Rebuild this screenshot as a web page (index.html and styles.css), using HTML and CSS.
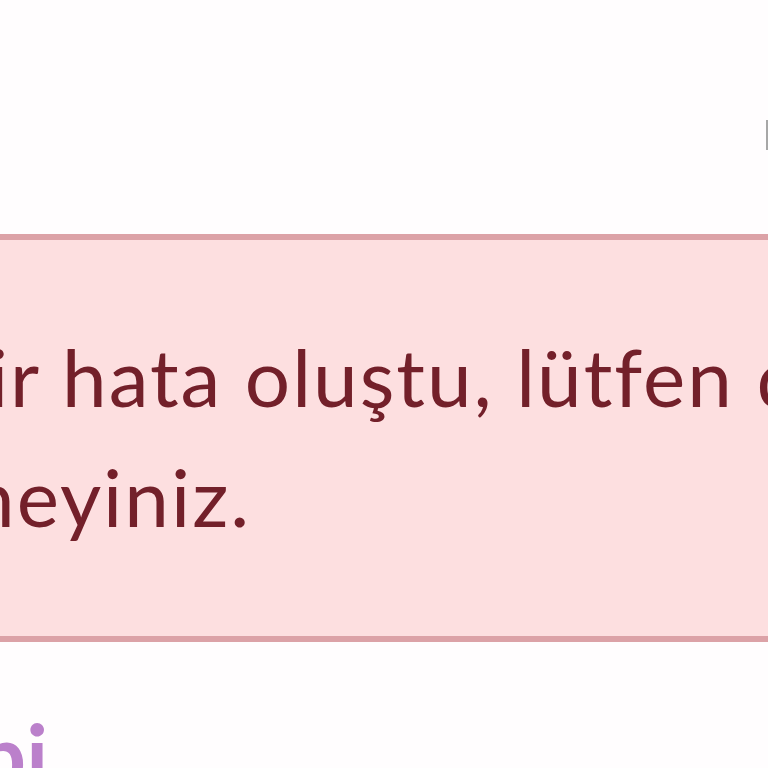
FILE: index.html
```html
<!DOCTYPE html>
<html lang="tr">
<head>
<meta charset="utf-8">
<title>Hata</title>
<link rel="stylesheet" href="styles.css">
</head>
<body>
<div class="page">
  <header class="top">
    <span class="mark"></span>
  </header>
  <div class="alert" role="alert">
    <p class="alert-text">Bir hata oluştu, lütfen daha sonra tekrar<br>deneyiniz.</p>
  </div>
  <div class="section-row">
    <h2 class="section-title">Ödeme Tipi</h2>
  </div>
</div>
</body>
</html>
```
FILE: styles.css
```css
html, body {
  margin: 0;
  padding: 0;
  background: #fffdfe;
}
.page {
  width: 768px;
  height: 768px;
  overflow: hidden;
  font-family: Lato, "Noto Sans", sans-serif;
}
.top {
  height: 234px;
  box-sizing: border-box;
  padding-top: 120px;
  display: flex;
  justify-content: flex-end;
}
.mark {
  width: 2px;
  height: 30px;
  background: #a7a7a7;
}
.alert {
  margin-left: -121px;
  width: 1600px;
  border-top: 6px solid #dca2a7;
  border-bottom: 6px solid #dca2a7;
  background: #fddfe0;
  padding: 76px 0 80px;
}
.alert-text {
  margin: 0;
  font-size: 80px;
  line-height: 120px;
  letter-spacing: 2px;
  font-variant-ligatures: none;
  color: #73202a;
  text-indent: 57px;
  white-space: nowrap;
}
.section-row {
  width: 48px;
  display: flex;
  justify-content: flex-end;
  margin-top: 60px;
}
.section-title {
  flex: none;
  margin: 0;
  font-size: 86px;
  font-weight: 700;
  line-height: 1.2;
  white-space: nowrap;
  color: #bb80cb;
}
```
